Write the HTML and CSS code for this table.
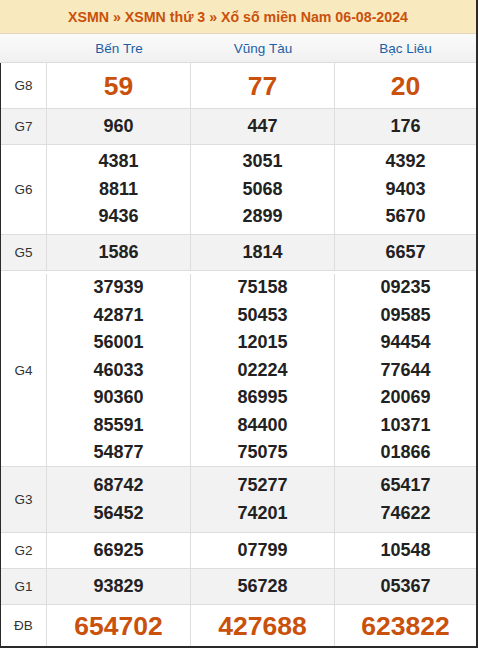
FILE: index.html
```html
<!DOCTYPE html>
<html lang="vi">
<head>
<meta charset="utf-8">
<title>XSMN 06-08-2024</title>
<link rel="stylesheet" href="styles.css">
</head>
<body>
<div class="board">
  <div class="title">XSMN » XSMN thứ 3 » Xổ số miền Nam 06-08-2024</div>
  <div class="provinces">
    <div class="pv-blank"></div>
    <div class="pv">Bến Tre</div>
    <div class="pv">Vũng Tàu</div>
    <div class="pv">Bạc Liêu</div>
  </div>
  <div class="grid">
    <div class="row r-g8">
      <div class="lbl">G8</div>
      <div class="cell big"><span>59</span></div>
      <div class="cell big"><span>77</span></div>
      <div class="cell big"><span>20</span></div>
    </div>
    <div class="row alt r-1">
      <div class="lbl">G7</div>
      <div class="cell"><span>960</span></div>
      <div class="cell"><span>447</span></div>
      <div class="cell"><span>176</span></div>
    </div>
    <div class="row r-g6">
      <div class="lbl">G6</div>
      <div class="cell"><span>4381</span><span>8811</span><span>9436</span></div>
      <div class="cell"><span>3051</span><span>5068</span><span>2899</span></div>
      <div class="cell"><span>4392</span><span>9403</span><span>5670</span></div>
    </div>
    <div class="row alt r-1">
      <div class="lbl">G5</div>
      <div class="cell"><span>1586</span></div>
      <div class="cell"><span>1814</span></div>
      <div class="cell"><span>6657</span></div>
    </div>
    <div class="row r-g4">
      <div class="lbl">G4</div>
      <div class="cell"><span>37939</span><span>42871</span><span>56001</span><span>46033</span><span>90360</span><span>85591</span><span>54877</span></div>
      <div class="cell"><span>75158</span><span>50453</span><span>12015</span><span>02224</span><span>86995</span><span>84400</span><span>75075</span></div>
      <div class="cell"><span>09235</span><span>09585</span><span>94454</span><span>77644</span><span>20069</span><span>10371</span><span>01866</span></div>
    </div>
    <div class="row alt r-g3">
      <div class="lbl">G3</div>
      <div class="cell"><span>68742</span><span>56452</span></div>
      <div class="cell"><span>75277</span><span>74201</span></div>
      <div class="cell"><span>65417</span><span>74622</span></div>
    </div>
    <div class="row r-1">
      <div class="lbl">G2</div>
      <div class="cell"><span>66925</span></div>
      <div class="cell"><span>07799</span></div>
      <div class="cell"><span>10548</span></div>
    </div>
    <div class="row alt r-1">
      <div class="lbl">G1</div>
      <div class="cell"><span>93829</span></div>
      <div class="cell"><span>56728</span></div>
      <div class="cell"><span>05367</span></div>
    </div>
    <div class="row r-db last">
      <div class="lbl">ĐB</div>
      <div class="cell big"><span>654702</span></div>
      <div class="cell big"><span>427688</span></div>
      <div class="cell big"><span>623822</span></div>
    </div>
  </div>
</div>
</body>
</html>
```
FILE: styles.css
```css
html, body {
  margin: 0;
  padding: 0;
  background: #ffffff;
}

body {
  font-family: "Liberation Sans", Arial, sans-serif;
  color: #222;
}

.board {
  width: 478px;
  height: 648px;
  box-sizing: border-box;
  border-right: 2px solid #2a2a2a;
  border-bottom: 2px solid #2a2a2a;
  display: flex;
  flex-direction: column;
}

.title {
  height: 33px;
  background: #f9e9bf;
  border-bottom: 1px solid #e3d7bb;
  display: flex;
  align-items: center;
  justify-content: center;
  font-size: 14.2px;
  font-weight: bold;
  color: #c9510c;
}

.provinces {
  height: 28px;
  display: grid;
  grid-template-columns: 47px 144px 144px 141px;
  background: linear-gradient(#fbfbfb, #f0f0f0);
  border-bottom: 1px solid #dcdcdc;
}

.pv {
  display: flex;
  align-items: center;
  justify-content: center;
  font-size: 13.5px;
  color: #1d5fa6;
}

.grid {
  flex: 1;
  border-left: 1px solid #2a2a2a;
  display: flex;
  flex-direction: column;
}

.row {
  display: grid;
  grid-template-columns: 46px 144px 144px 141px;
  border-bottom: 1px solid #dddddd;
  box-sizing: border-box;
}

.row.alt {
  background: #f2f2f2;
}

.row.last {
  border-bottom: none;
  flex: 1;
}

.r-g8 { height: 46px; }
.r-1 { height: 36px; }
.r-g6 { height: 90px; }
.r-g4 { height: 196px; padding-top: 3px; }
.r-g3 { height: 66px; }

.lbl {
  border-right: 1px solid #dddddd;
  display: flex;
  align-items: center;
  justify-content: center;
  font-size: 13.5px;
  color: #333;
}

.cell {
  display: flex;
  flex-direction: column;
  align-items: center;
  justify-content: center;
  border-right: 1px solid #dddddd;
  font-size: 18px;
  font-weight: bold;
  line-height: 27.5px;
  color: #222;
}

.cell:last-child {
  border-right: none;
}

.cell.big {
  font-size: 26.5px;
  color: #c9510c;
  line-height: 30px;
}
```
